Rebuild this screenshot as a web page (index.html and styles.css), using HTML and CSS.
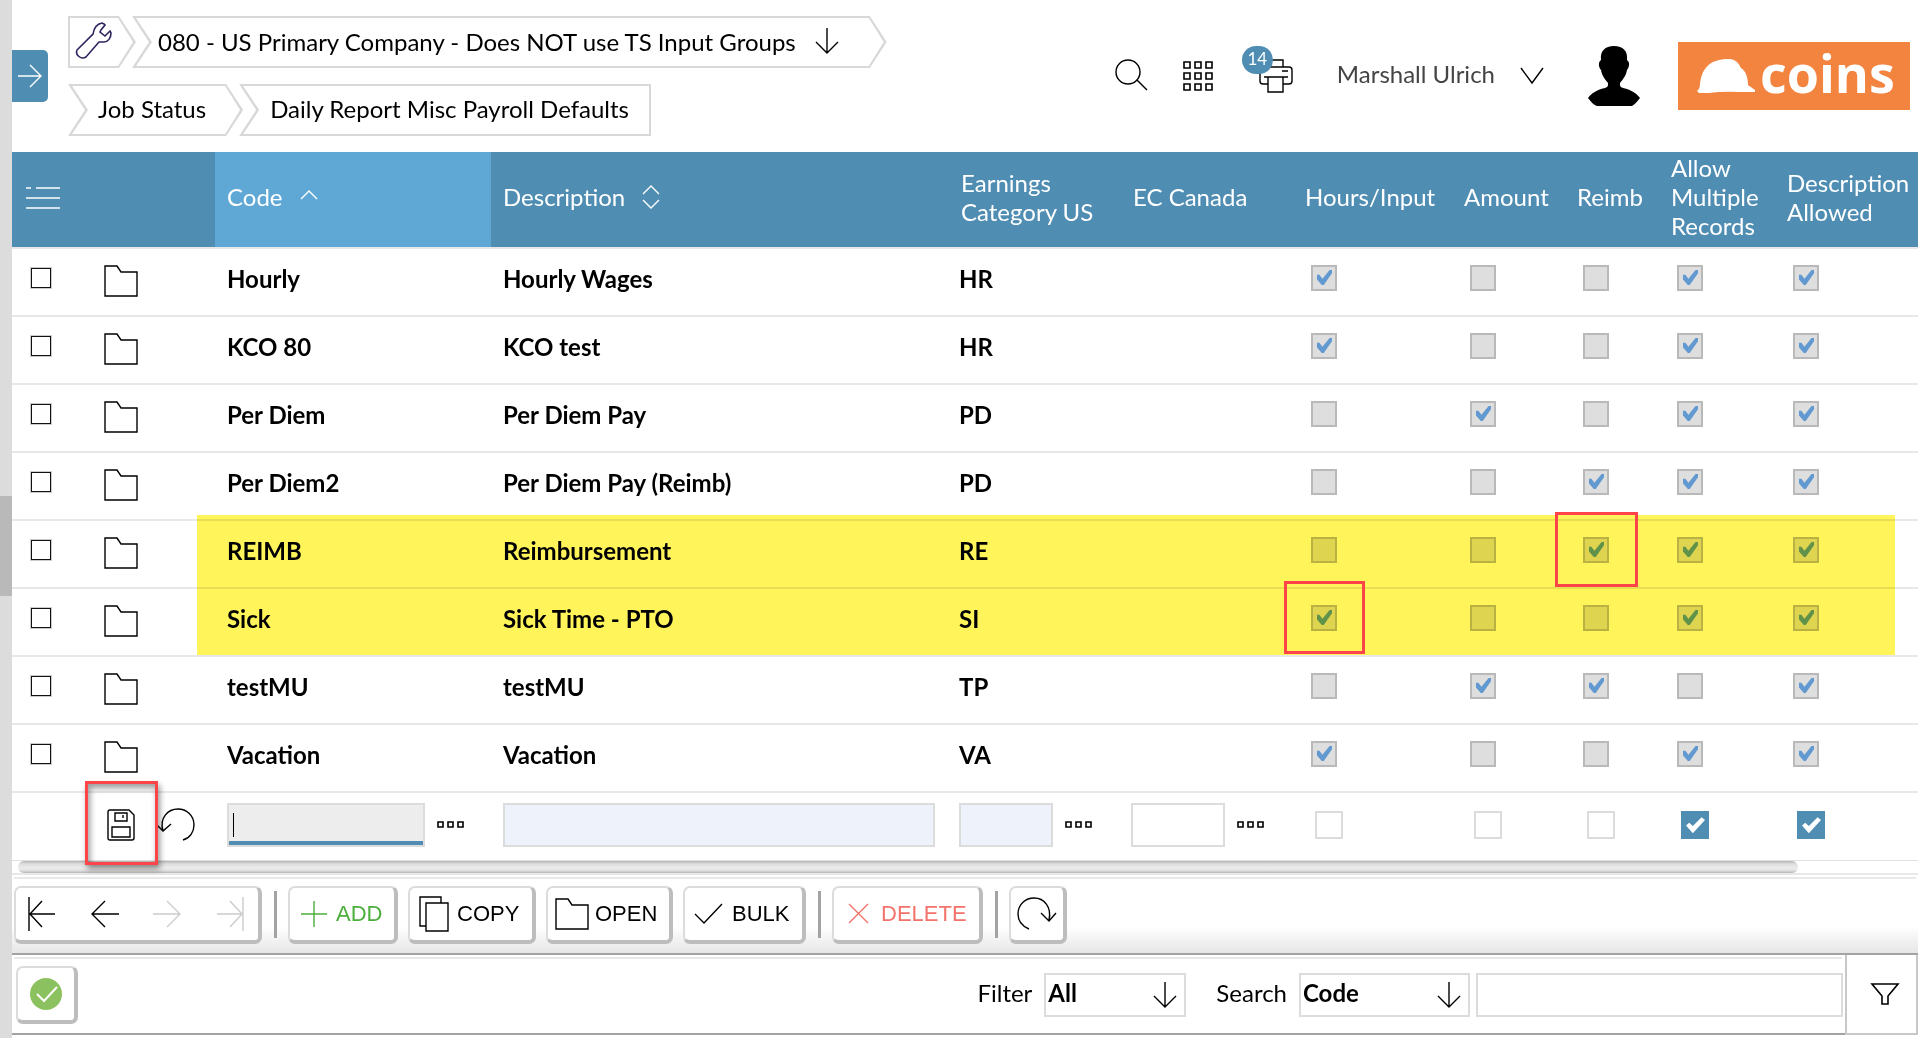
FILE: index.html
```html
<!DOCTYPE html>
<html lang="en">
<head>
<meta charset="utf-8">
<title>Daily Report Misc Payroll Defaults</title>
<link rel="stylesheet" href="styles.css">
</head>
<body>
<svg class="sprite" aria-hidden="true">
  <symbol id="folder" viewBox="0 0 34 32"><path d="M1 1h12l4 6h16v24H1z"/></symbol>
  <symbol id="down" viewBox="0 0 24 26"><path d="M12 0v25M1 14l11 11 11-11"/></symbol>
  <symbol id="dots" viewBox="0 0 28 8"><path d="M1 1h5v5H1zM11 1h5v5h-5zM21 1h5v5h-5z"/></symbol>
</svg>
<div class="app">
  <div class="gutter"><div class="gutter-thumb"></div></div>
  <main class="main">
    <header class="top">
      <button class="expand" aria-label="Expand menu"><svg class="icon" width="24" height="24" viewBox="0 0 24 24"><path d="M0 12h23M12 1l11 11-11 11"/></svg></button>
      <nav class="crumbs" aria-label="Breadcrumb">
        <div class="crumb-line">
          <a href="#" class="crumb crumb-tool" aria-label="Tools"><svg class="icon wrench" width="37" height="38" viewBox="0 0 37 38"><path d="M2 29 18 13c1-7 4-10 9-11l2 1 1 1-4 5-1 2 5 4 1-1 4-4 1 2c0 5-3 9-7 9h-5L11 36c-5 3-11-2-9-7z"/></svg></a>
          <a href="#" class="crumb crumb-company">080 - US Primary Company - Does NOT use TS Input Groups<svg class="icon" width="24" height="26"><use href="#down"/></svg></a>
        </div>
        <div class="crumb-line">
          <a href="#" class="crumb crumb-job">Job Status</a>
          <a href="#" class="crumb crumb-page">Daily Report Misc Payroll Defaults</a>
        </div>
      </nav>
      <div class="user">
        <button class="plain" aria-label="Search"><svg class="icon" width="34" height="34" viewBox="0 0 34 34"><circle cx="13" cy="13" r="12"/><path d="m22 21 10 10"/></svg></button>
        <button class="plain apps" aria-label="Applications"><svg class="icon bold" width="30" height="30" viewBox="0 0 30 30"><path d="M1 1h6v6H1zM12 1h6v6h-6zM23 1h6v6h-6zM1 12h6v6H1zM12 12h6v6h-6zM23 12h6v6h-6zM1 23h6v6H1zM12 23h6v6h-6zM23 23h6v6h-6z"/></svg></button>
        <button class="plain printer" aria-label="Print queue"><svg class="icon" width="34" height="34" viewBox="0 0 34 34"><path d="M9 8V1h15v7M9 25H4q-3 0-3-3V11q0-3 3-3h26q3 0 3 3v11q0 3-3 3h-6M5 18h24M23 12h6M9 18h15v15H9z"/></svg><span class="badge">14</span></button>
        <button class="plain name"><span>Marshall Ulrich</span><svg class="icon" width="24" height="18" viewBox="0 0 24 18"><path d="m1 1 11 15L23 1"/></svg></button>
        <svg class="avatar" width="52" height="60" viewBox="0 0 52 60"><path d="M26 0c9 0 14 5 13 14l1 1c2 2 1 7-1 9-1 6-4 9-7 13 0 3 0 4 3 5 9 2 14 6 17 10-4 5-6 7-8 8H9c-3-1-6-4-9-8 3-4 8-8 17-10 3-1 3-2 3-5-3-4-6-7-7-13-2-2-3-7-1-9l1-1C12 5 17 0 26 0z"/></svg>
        <a href="#" class="logo" aria-label="coins"><svg width="58" height="34" viewBox="0 0 58 34"><path d="M0 32q3-2 3-7C5 8 14 1 29 0q11-1 15 9c5 3 7 10 7 17l7 5v2H42q-16-1-30 1H2z"/></svg><span>coins</span></a>
      </div>
    </header>

    <section class="grid">
      <table class="list">
        <colgroup><col class="c-pick"><col class="c-act"><col class="c-code"><col><col class="c-earn"><col class="c-ec"><col class="c-hours"><col class="c-amount"><col class="c-reimb"><col class="c-allow"><col class="c-descr"></colgroup>
        <thead>
          <tr>
            <th><svg class="icon" width="34" height="22" viewBox="0 0 34 22"><path d="M0 1h5M10 1h24M0 11h34M0 21h34"/></svg></th>
            <th></th>
            <th class="sorted">Code<svg class="icon sort" width="18" height="24" viewBox="0 0 18 24"><path d="m1 14 8-8 8 8"/></svg></th>
            <th>Description<svg class="icon sort" width="18" height="24" viewBox="0 0 18 24"><path d="m1 9 8-8 8 8M1 15l8 8 8-8"/></svg></th>
            <th>Earnings Category US</th><th>EC Canada</th><th>Hours/Input</th><th>Amount</th><th>Reimb</th><th>Allow Multiple Records</th><th>Description Allowed</th>
          </tr>
        </thead>
        <tbody>
          <tr>
            <td><input class="pick" type="checkbox" aria-label="Select Hourly"></td><td><svg class="icon folder" width="34" height="32"><use href="#folder"/></svg></td>
            <td>Hourly</td><td>Hourly Wages</td><td>HR</td><td></td>
            <td><input class="flag" type="checkbox" aria-label="Hours/Input" disabled checked></td><td><input class="flag" type="checkbox" aria-label="Amount" disabled></td><td><input class="flag" type="checkbox" aria-label="Reimb" disabled></td><td><input class="flag" type="checkbox" aria-label="Allow Multiple Records" disabled checked></td><td><input class="flag" type="checkbox" aria-label="Description Allowed" disabled checked></td>
          </tr>
          <tr>
            <td><input class="pick" type="checkbox" aria-label="Select KCO 80"></td><td><svg class="icon folder" width="34" height="32"><use href="#folder"/></svg></td>
            <td>KCO 80</td><td>KCO test</td><td>HR</td><td></td>
            <td><input class="flag" type="checkbox" aria-label="Hours/Input" disabled checked></td><td><input class="flag" type="checkbox" aria-label="Amount" disabled></td><td><input class="flag" type="checkbox" aria-label="Reimb" disabled></td><td><input class="flag" type="checkbox" aria-label="Allow Multiple Records" disabled checked></td><td><input class="flag" type="checkbox" aria-label="Description Allowed" disabled checked></td>
          </tr>
          <tr>
            <td><input class="pick" type="checkbox" aria-label="Select Per Diem"></td><td><svg class="icon folder" width="34" height="32"><use href="#folder"/></svg></td>
            <td>Per Diem</td><td>Per Diem Pay</td><td>PD</td><td></td>
            <td><input class="flag" type="checkbox" aria-label="Hours/Input" disabled></td><td><input class="flag" type="checkbox" aria-label="Amount" disabled checked></td><td><input class="flag" type="checkbox" aria-label="Reimb" disabled></td><td><input class="flag" type="checkbox" aria-label="Allow Multiple Records" disabled checked></td><td><input class="flag" type="checkbox" aria-label="Description Allowed" disabled checked></td>
          </tr>
          <tr>
            <td><input class="pick" type="checkbox" aria-label="Select Per Diem2"></td><td><svg class="icon folder" width="34" height="32"><use href="#folder"/></svg></td>
            <td>Per Diem2</td><td>Per Diem Pay (Reimb)</td><td>PD</td><td></td>
            <td><input class="flag" type="checkbox" aria-label="Hours/Input" disabled></td><td><input class="flag" type="checkbox" aria-label="Amount" disabled></td><td><input class="flag" type="checkbox" aria-label="Reimb" disabled checked></td><td><input class="flag" type="checkbox" aria-label="Allow Multiple Records" disabled checked></td><td><input class="flag" type="checkbox" aria-label="Description Allowed" disabled checked></td>
          </tr>
          <tr>
            <td><input class="pick" type="checkbox" aria-label="Select REIMB"></td><td><svg class="icon folder" width="34" height="32"><use href="#folder"/></svg></td>
            <td>REIMB</td><td>Reimbursement</td><td>RE</td><td></td>
            <td><input class="flag" type="checkbox" aria-label="Hours/Input" disabled></td><td><input class="flag" type="checkbox" aria-label="Amount" disabled></td><td><input class="flag" type="checkbox" aria-label="Reimb" disabled checked><span class="mark mark-reimb"></span></td><td><input class="flag" type="checkbox" aria-label="Allow Multiple Records" disabled checked></td><td><input class="flag" type="checkbox" aria-label="Description Allowed" disabled checked></td>
          </tr>
          <tr>
            <td><input class="pick" type="checkbox" aria-label="Select Sick"></td><td><svg class="icon folder" width="34" height="32"><use href="#folder"/></svg></td>
            <td>Sick</td><td>Sick Time - PTO</td><td>SI</td><td></td>
            <td><input class="flag" type="checkbox" aria-label="Hours/Input" disabled checked><span class="mark mark-hours"></span></td><td><input class="flag" type="checkbox" aria-label="Amount" disabled></td><td><input class="flag" type="checkbox" aria-label="Reimb" disabled></td><td><input class="flag" type="checkbox" aria-label="Allow Multiple Records" disabled checked></td><td><input class="flag" type="checkbox" aria-label="Description Allowed" disabled checked></td>
          </tr>
          <tr>
            <td><input class="pick" type="checkbox" aria-label="Select testMU"></td><td><svg class="icon folder" width="34" height="32"><use href="#folder"/></svg></td>
            <td>testMU</td><td>testMU</td><td>TP</td><td></td>
            <td><input class="flag" type="checkbox" aria-label="Hours/Input" disabled></td><td><input class="flag" type="checkbox" aria-label="Amount" disabled checked></td><td><input class="flag" type="checkbox" aria-label="Reimb" disabled checked></td><td><input class="flag" type="checkbox" aria-label="Allow Multiple Records" disabled></td><td><input class="flag" type="checkbox" aria-label="Description Allowed" disabled checked></td>
          </tr>
          <tr>
            <td><input class="pick" type="checkbox" aria-label="Select Vacation"></td><td><svg class="icon folder" width="34" height="32"><use href="#folder"/></svg></td>
            <td>Vacation</td><td>Vacation</td><td>VA</td><td></td>
            <td><input class="flag" type="checkbox" aria-label="Hours/Input" disabled checked></td><td><input class="flag" type="checkbox" aria-label="Amount" disabled></td><td><input class="flag" type="checkbox" aria-label="Reimb" disabled></td><td><input class="flag" type="checkbox" aria-label="Allow Multiple Records" disabled checked></td><td><input class="flag" type="checkbox" aria-label="Description Allowed" disabled checked></td>
          </tr>
          <tr class="entry">
            <td></td>
            <td><div class="row-tools">
              <button class="plain" aria-label="Save"><svg class="icon" width="28" height="32" viewBox="0 0 28 32"><path d="M3 1h19l5 5v23q0 2-2 2H3q-2 0-2-2V3q0-2 2-2zM8 4h12v8H8zM16 6v3M5 18h18v10H5z"/></svg></button>
              <button class="plain" aria-label="Undo"><svg class="icon" width="38" height="34" viewBox="0 0 38 34"><path d="M6 23C2 10 11 1 21 1c8 0 16 6 16 16 0 7-4 13-11 15M0 17l6 6 8-7"/></svg></button>
            </div><span class="mark mark-save"></span></td>
            <td><div class="lookup"><span class="focus-field"><input class="field" type="text" aria-label="Code"><i class="caret"></i></span><button class="plain" aria-label="Look up code"><svg class="icon bold" width="28" height="8"><use href="#dots"/></svg></button></div></td>
            <td><input class="field tint wide" type="text" aria-label="Description"></td>
            <td><div class="lookup"><input class="field tint short" type="text" aria-label="Earnings Category US"><button class="plain" aria-label="Look up earnings category"><svg class="icon bold" width="28" height="8"><use href="#dots"/></svg></button></div></td>
            <td><div class="lookup"><input class="field short" type="text" aria-label="EC Canada"><button class="plain" aria-label="Look up EC Canada"><svg class="icon bold" width="28" height="8"><use href="#dots"/></svg></button></div></td>
            <td><input class="tick" type="checkbox" aria-label="Hours/Input"></td><td><input class="tick" type="checkbox" aria-label="Amount"></td><td><input class="tick" type="checkbox" aria-label="Reimb"></td><td><input class="tick" type="checkbox" aria-label="Allow Multiple Records" checked></td><td><input class="tick" type="checkbox" aria-label="Description Allowed" checked></td>
          </tr>
        </tbody>
      </table>
      <div class="highlight"></div>
      <div class="hscroll"><div class="hscroll-thumb"></div></div>
    </section>

    <div class="toolbar">
      <div class="btn pager">
        <button class="plain" aria-label="First"><svg class="icon" width="28" height="34" viewBox="0 0 28 34"><path d="M1 0v34M27 17H2M14 4 2 17l12 13"/></svg></button>
        <button class="plain" aria-label="Previous"><svg class="icon" width="28" height="34" viewBox="0 0 28 34"><path d="M28 17H1M14 4 1 17l13 13"/></svg></button>
        <button class="plain" aria-label="Next" disabled><svg class="icon" width="28" height="34" viewBox="0 0 28 34"><path d="M0 17h27M14 4l13 13-13 13"/></svg></button>
        <button class="plain" aria-label="Last" disabled><svg class="icon" width="28" height="34" viewBox="0 0 28 34"><path d="M27 0v34M1 17h25M14 4l12 13-12 13"/></svg></button>
      </div>
      <span class="sep"></span>
      <button class="btn add"><svg class="icon" width="26" height="28" viewBox="0 0 26 28"><path d="M13 1v26M0 14h26"/></svg>ADD</button>
      <button class="btn copy"><svg class="icon" width="30" height="36" viewBox="0 0 30 36"><path d="M7 30H1V1h21v6M7 7h22v28H7z"/></svg>COPY</button>
      <button class="btn open"><svg class="icon" width="34" height="32"><use href="#folder"/></svg>OPEN</button>
      <button class="btn bulk"><svg class="icon" width="27" height="20" viewBox="0 0 27 20"><path d="m0 10 9 9L27 0"/></svg>BULK</button>
      <span class="sep"></span>
      <button class="btn delete"><svg class="icon" width="21" height="21" viewBox="0 0 21 21"><path d="m1 1 19 19M20 1 1 20"/></svg>DELETE</button>
      <span class="sep"></span>
      <button class="btn refresh" aria-label="Refresh"><svg class="icon" width="40" height="34" viewBox="0 0 40 34"><path d="M12 32C5 29 1 24 1 17 1 7 9 1 17 1c10 0 18 9 15 22M24 16l8 8 7-8"/></svg></button>
    </div>

    <footer class="bottom">
      <div class="filters">
        <button class="btn status" aria-label="Confirm"><svg width="32" height="32" viewBox="0 0 32 32"><circle cx="16" cy="16" r="16"/><path d="m7 16 7 7L27 9"/></svg></button>
        <label for="filter">Filter</label>
        <span class="drop drop-filter"><select id="filter"><option>All</option></select><svg class="icon" width="24" height="26"><use href="#down"/></svg></span>
        <label for="search" class="search-label">Search</label>
        <span class="drop drop-search"><select id="search"><option>Code</option></select><svg class="icon" width="24" height="26"><use href="#down"/></svg></span>
        <input class="field query" type="text" aria-label="Search text">
      </div>
      <button class="plain funnel" aria-label="Advanced filter"><svg class="icon bold" width="28" height="22" viewBox="0 0 28 22"><path d="M1 1h26L17 13v8h-6v-8z"/></svg></button>
    </footer>
  </main>
</div>
</body>
</html>
```
FILE: styles.css
```css
* { box-sizing: border-box; }

body {
  margin: 0;
  background: #fff;
  color: #000;
  font: 24px/29px Lato, sans-serif;
}

button, input, select { font: inherit; color: inherit; margin: 0; }
a { color: inherit; text-decoration: none; }
.sprite { position: absolute; width: 0; height: 0; }
.icon { fill: none; stroke: currentColor; stroke-width: 1.4; flex: none; display: block; overflow: visible; }
.icon.bold { stroke-width: 1.6; }
.plain { display: flex; align-items: center; padding: 0; border: 0; background: none; }

.app { display: flex; min-height: 100vh; padding-right: 2px; }
.gutter { flex: none; width: 12px; padding-top: 496px; background: #dcdcdc; }
.gutter-thumb { height: 100px; background: #b9b9b9; }
.main { flex: 1; min-width: 0; }

/* Header */
.top { display: flex; align-items: flex-start; min-height: 152px; padding-right: 8px; }
.expand { display: flex; align-items: center; width: 36px; height: 52px; margin-top: 50px; padding: 0 6px; border: 0; border-radius: 0 5px 5px 0; background: #4f8db3; color: #fff; }
.crumbs { display: flex; flex-direction: column; gap: 16px; padding: 16px 0 0 20px; flex: 1; }
.crumb-line { display: flex; }
.crumb { position: relative; isolation: isolate; display: flex; align-items: center; height: 52px; padding-bottom: 4px; background: #d8d8d8; white-space: nowrap; }
.crumb::before { content: ""; position: absolute; inset: 0; z-index: -1; background: #fff; }
.crumb + .crumb { margin-left: -4px; }
.crumb-tool { width: 68px; padding-left: 7px; color: #2f2260; clip-path: polygon(0 0, calc(100% - 17px) 0, 100% 50%, calc(100% - 17px) 100%, 0 100%); }
.crumb-tool::before { clip-path: polygon(2px 2px, calc(100% - 18px) 2px, calc(100% - 3px) 50%, calc(100% - 18px) 50px, 2px 50px); }
.crumb-company, .crumb-job { clip-path: polygon(0 0, calc(100% - 17px) 0, 100% 50%, calc(100% - 17px) 100%, 0 100%, 17px 50%); }
.crumb-company::before, .crumb-job::before { clip-path: polygon(4px 2px, calc(100% - 18px) 2px, calc(100% - 3px) 50%, calc(100% - 18px) 50px, 4px 50px, 20px 50%); }
.crumb-company { gap: 19px; padding-bottom: 2px; padding-left: 26px; padding-right: 48px; }
.crumb-job { padding-left: 30px; padding-right: 37px; }
.crumb-page { padding-left: 31px; padding-right: 22px; clip-path: polygon(0 0, 100% 0, 100% 100%, 0 100%, 17px 50%); }
.crumb-page::before { clip-path: polygon(4px 2px, calc(100% - 2px) 2px, calc(100% - 2px) 50px, 4px 50px, 20px 50%); }
.wrench { stroke-width: 1.6; }

.user { display: flex; align-items: center; height: 152px; }
.apps { margin-left: 34px; }
.printer { position: relative; margin-left: 46px; }
.badge { position: absolute; left: -17px; top: -13px; width: 31px; height: 28px; border-radius: 14px; background: #4f8db3; color: #fff; font-size: 17px; line-height: 25px; text-align: center; }
.name { gap: 25px; margin-left: 44px; color: #444; }
.name span { padding-bottom: 6px; }
.name .icon { color: #000; }
.avatar { margin-left: 44px; }
.logo { display: flex; align-items: center; gap: 5px; width: 232px; height: 68px; margin-left: 38px; padding-left: 19px; background: #f38440; color: #fff; fill: #fff; font: 700 52px/60px "Open Sans", sans-serif; }
.logo span { padding-bottom: 6px; }

/* Table */
.grid { position: relative; }
.list { width: 100%; table-layout: fixed; border-collapse: collapse; }
.c-pick { width: 80px; }
.c-act { width: 123px; }
.c-code { width: 276px; }
.c-earn { width: 172px; }
.c-ec { width: 172px; }
.c-hours { width: 159px; }
.c-amount { width: 113px; }
.c-reimb { width: 94px; }
.c-allow { width: 116px; }
.c-descr { width: 143px; }
th { height: 96px; padding: 0 0 6px 12px; background: #4f8db3; color: #fff; font-weight: 400; text-align: left; }
th.sorted { background: #5fa8d6; }
th:first-child { padding-left: 14px; padding-bottom: 4px; }
.sort { display: inline-block; vertical-align: middle; margin: -6px 0 0 17px; }
td { position: relative; height: 68px; padding: 0 0 8px 12px; border-top: 2px solid #e8e8e8; font-weight: 700; vertical-align: middle; }
td:first-child { padding-left: 19px; }
td:nth-child(5), td:nth-child(6) { padding-left: 10px; }
td input { display: block; }
.folder { margin-top: 6px; }

.pick, .flag, .tick { appearance: none; }
.pick { width: 20px; height: 20px; border: 1px solid #111; box-shadow: 0 0 0 1px #ccc; background: #fff; }
.flag { width: 26px; height: 26px; margin-left: 6px; border: 2px solid #b9b9b9; background: #dedede; }
.flag:checked::before { content: ""; display: block; width: 15px; height: 15px; margin: 3px 0 0 4px; background: #6199d0; clip-path: polygon(0 32%, 16% 32%, 36% 58%, 84% 0, 100% 0, 100% 22%, 45% 100%, 32% 100%, 0 64%); }
.tick { width: 28px; height: 28px; margin-left: 10px; border: 2px solid #dcdcdc; background: #fff; }
.tick:checked { border-color: #4f8db3; background: #4f8db3; }
.tick:checked::before { content: ""; display: block; width: 19px; height: 16px; margin: 4px 0 0 3px; background: #fff; clip-path: polygon(0 52%, 17% 35%, 36% 55%, 82% 0, 100% 17%, 36% 100%); }

.entry td { padding-bottom: 2px; border-bottom: 1px solid #e0e0e0; }
.row-tools { display: flex; align-items: center; gap: 22px; padding-left: 3px; }
.lookup { display: flex; align-items: center; gap: 12px; }
.field { min-width: 0; height: 44px; padding: 0 4px; border: 2px solid #dcdcdc; border-radius: 0; background: #fff; outline: 0; }
.focus-field { position: relative; }
.focus-field .field { width: 198px; background: #ededed; box-shadow: inset 0 -4px #4f8db3; }
.caret { position: absolute; left: 6px; top: 10px; width: 1px; height: 24px; background: #000; }
.tint { background: #edf2fb; }
.wide { width: calc(100% - 14px); }
.short { width: 94px; }

/* Annotations over the table */
.highlight { position: absolute; left: 185px; right: 23px; top: 363px; height: 140px; background: #fff45a; mix-blend-mode: multiply; }
.mark { position: absolute; z-index: 2; border: 3px solid #fd4448; }
.mark-reimb { left: -10px; top: -9px; width: 83px; height: 75px; }
.mark-hours { left: -9px; top: -8px; width: 81px; height: 73px; }
.mark-save { left: -7px; top: -12px; width: 73px; height: 84px; box-shadow: 2px 4px 6px #0006, inset 2px 4px 6px #0006; }

.hscroll { padding: 0 120px 0 6px; border-bottom: 2px solid #e8e8e8; }
.hscroll-thumb { height: 12px; border-radius: 6px; background: linear-gradient(#b4b4b4, #dedede 25%, #ededed 60%, #dedede 80%, #b4b4b4); }

/* Toolbar */
.toolbar { display: flex; align-items: center; gap: 10px; height: 80px; padding: 2px 2px 0; border-bottom: 2px solid #a3a3a3; background: linear-gradient(#e8e8e8, #e8e8e8) 2px 2px / calc(100% - 4px) 2px no-repeat, linear-gradient(#fff 66%, #e6e6e6); }
.btn { display: flex; align-items: center; height: 58px; padding: 0 8px; border: 2px solid #dcdcdc; border-right: 4px solid #bdbdbd; border-bottom: 4px solid #bdbdbd; border-radius: 7px; background: #fff; font: 22px/26px "Liberation Sans", sans-serif; white-space: nowrap; }
.pager { width: 248px; justify-content: space-between; padding: 0 14px 0 12px; }
.pager :disabled { color: #ccc; }
.sep { width: 3px; height: 47px; margin: 0 1px 0 2px; background: #a3a3a3; }
.add { width: 110px; gap: 9px; padding-left: 11px; color: #4cae3c; }
.copy { width: 128px; gap: 8px; padding-left: 9px; }
.open { width: 127px; gap: 6px; padding-left: 7px; }
.bulk { width: 123px; gap: 10px; padding-left: 10px; }
.delete { width: 151px; gap: 12px; padding-left: 14px; color: #f2736b; }
.refresh { width: 58px; padding-left: 6px; }

/* Filter bar */
.bottom { display: flex; height: 80px; }
.filters { flex: 1; display: flex; align-items: center; padding: 2px 2px 0 4px; border-bottom: 2px solid #a3a3a3; background: linear-gradient(#e8e8e8, #e8e8e8) 2px 2px / calc(100% - 5px) 2px no-repeat; }
.status { width: 62px; margin-right: auto; padding-left: 12px; }
.status circle { fill: #8bc15f; }
.status path { fill: none; stroke: #fff; stroke-width: 2; }
.filters label { padding-bottom: 4px; }
.search-label { margin-left: 30px; }
.drop { display: grid; align-items: center; height: 44px; margin-left: 12px; }
.drop select { grid-area: 1 / 1; width: 100%; height: 44px; padding: 0 4px 4px 2px; border: 2px solid #dcdcdc; border-radius: 0; background: #fff; appearance: none; font-weight: 700; }
.drop .icon { grid-area: 1 / 1; justify-self: end; margin-right: 9px; pointer-events: none; }
.drop-filter { width: 142px; }
.drop-search { width: 171px; }
.query { flex: none; width: 367px; margin-left: 6px; }
.funnel { width: 73px; justify-content: center; padding-left: 6px; border: 2px solid #c8c8c8; border-top: 0; }
```
